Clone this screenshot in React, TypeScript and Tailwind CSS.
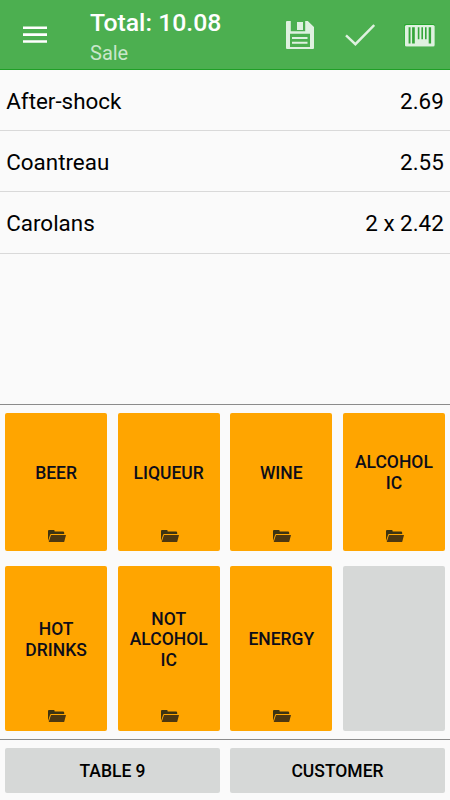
import React from 'react';
import clsx from 'clsx';

interface OrderLine {
  name: string;
  amount: string;
}

interface Category {
  label: string[];
}

const orderLines: OrderLine[] = [
  { name: 'After-shock', amount: '2.69' },
  { name: 'Coantreau', amount: '2.55' },
  { name: 'Carolans', amount: '2 x 2.42' },
];

const topCategories: Category[] = [
  { label: ['BEER'] },
  { label: ['LIQUEUR'] },
  { label: ['WINE'] },
  { label: ['ALCOHOL', 'IC'] },
];

const bottomCategories: (Category | null)[] = [
  { label: ['HOT', 'DRINKS'] },
  { label: ['NOT', 'ALCOHOL', 'IC'] },
  { label: ['ENERGY'] },
  null,
];

const MenuIcon: React.FC = () => (
  <svg width="24" height="17" viewBox="0 0 24 17" fill="#fff">
    <path d="M0 .4h24v2.6H0zM0 7.3h24v2.6H0zM0 14.2h24v2.6H0z" />
  </svg>
);

const SaveIcon: React.FC = () => (
  <svg width="28" height="28" viewBox="0 0 28 28" fill="#dff1e0">
    <path
      fillRule="evenodd"
      d="M1 0h3.8v10.2h14.4V0h2.6L28 6v21a1 1 0 0 1-1 1H1a1 1 0 0 1-1-1V1a1 1 0 0 1 1-1zM4 12.8V26h20V12.8z"
    />
    <path d="M11 1h6v8h-6zM6 16h15.5v2H6zM6 20.7h15.5v2H6z" />
  </svg>
);

const CheckIcon: React.FC = () => (
  <svg width="30" height="22" viewBox="0 0 30 22" fill="none" stroke="#dff1e0" strokeWidth="2.4">
    <path d="M1 11.3l9.4 8.9L29.2 1" />
  </svg>
);

const BarcodeIcon: React.FC = () => (
  <svg width="31" height="23" viewBox="0 0 31 23">
    <rect x="0" y="0" width="31" height="22.5" rx="2" fill="#26a72d" />
    <rect x=".9" y="1" width="29.8" height="21.5" rx="1.6" fill="#dff1e0" />
    <path
      fill="#35a63a"
      d="M4.6 3.2h1.9v16.2H4.6zM8.1 3.2h2.7v16.2H8.1zM13.8 3.2h1.6v12h-1.6zM17.4 3.2H19v12h-1.6zM21 3.2h1.6v12H21zM24.7 3.2h2.4v16.2h-2.4z"
    />
  </svg>
);

const FolderIcon: React.FC = () => (
  <svg width="18" height="12" viewBox="0 0 18 12" fill="#4d3710">
    <path d="M0 11V1q0-1 1-1h4.8q.8 0 .8.8V1.6H15q1.2 0 1.2 1.2V4H3.2q-.9 0-1.2.9z" fill="#3d3412" />
    <path d="M3 5h15l-1.7 6.4q-.2.6-.8.6H.7z" />
  </svg>
);

const CategoryButton: React.FC<{ category: Category | null }> = ({ category }) => (
  <button
    className={clsx(
      'relative flex items-center justify-center rounded-[2px] pb-[18px] text-[17.5px] leading-[20.5px] font-medium text-[#0d0d1a]',
      category ? 'bg-[#ffa500]' : 'bg-[#d6d8d7]'
    )}
  >
    {category && (
      <>
        <span className="flex flex-col items-center">
          {category.label.map((line) => (
            <span key={line}>{line}</span>
          ))}
        </span>
        <span className="absolute bottom-[9px] left-[43px]">
          <FolderIcon />
        </span>
      </>
    )}
  </button>
);

const App: React.FC = () => {
  return (
    <div className="flex h-[800px] w-[450px] flex-col overflow-hidden bg-[#fafafa] font-['Roboto',sans-serif] text-black">
      <header className="flex h-[70px] shrink-0 items-center border-b border-[#1f9f26] bg-[#4caf50] pl-[23px] pr-[15px]">
        <MenuIcon />
        <div className="ml-[43px] flex flex-1 flex-col pt-[7px]">
          <h1 className="text-[24.8px] leading-[29px] font-medium text-white">Total: 10.08</h1>
          <span className="mt-px text-[20px] leading-[31px] text-[#c9e7cb]">Sale</span>
        </div>
        <div className="flex items-center">
          <SaveIcon />
          <span className="ml-[31px]">
            <CheckIcon />
          </span>
          <span className="ml-[29px] pt-[2px]">
            <BarcodeIcon />
          </span>
        </div>
      </header>

      <ul className="h-[334px] shrink-0">
        {orderLines.map((line) => (
          <li
            key={line.name}
            className="flex h-[61.2px] items-center justify-between border-b border-[#d9d9d9] px-[6.25px] pt-[3px] text-[22.4px]"
          >
            <span>{line.name}</span>
            <span>{line.amount}</span>
          </li>
        ))}
      </ul>

      <section className="flex h-[335px] shrink-0 flex-col gap-[15px] border-t border-[#8b8b8b] px-[5px] pt-[7.5px]">
        <div className="grid h-[138.5px] grid-cols-4 gap-[10.4px]">
          {topCategories.map((category, i) => (
            <CategoryButton key={i} category={category} />
          ))}
        </div>
        <div className="grid h-[165px] grid-cols-4 gap-[10.4px]">
          {bottomCategories.map((category, i) => (
            <CategoryButton key={i} category={category} />
          ))}
        </div>
      </section>

      <footer className="grid h-[61px] shrink-0 grid-cols-2 gap-[10px] border-t border-[#8b8b8b] px-[5px] pt-[7.5px] pb-[7.5px] text-[17.5px] font-medium">
        <button className="rounded-[2px] bg-[#d6d8d7] pt-[2px]">TABLE 9</button>
        <button className="rounded-[2px] bg-[#d6d8d7] pt-[2px]">CUSTOMER</button>
      </footer>
    </div>
  );
};

export default App;
